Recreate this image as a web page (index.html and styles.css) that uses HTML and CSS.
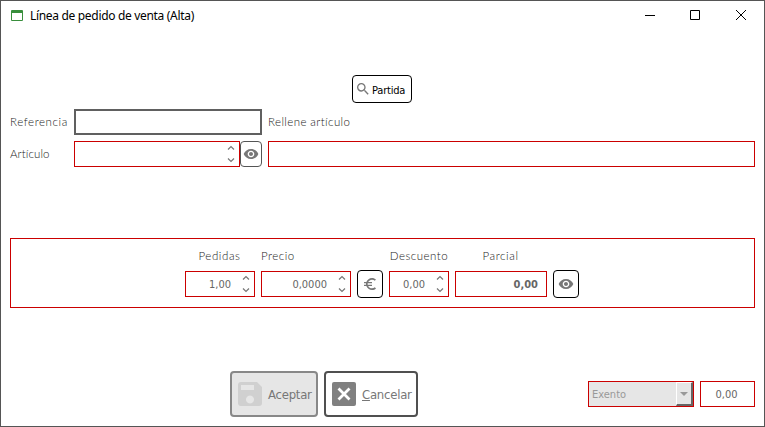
FILE: index.html
```html
<!DOCTYPE html>
<html lang="es">
<head>
<meta charset="utf-8">
<title>Línea de pedido de venta (Alta)</title>
<link rel="stylesheet" href="styles.css">
</head>
<body>
<svg class="defs" width="0" height="0">
  <symbol id="eye" viewBox="0 0 24 24"><path d="M12 4.500C7 4.500 2.730 7.610 1 12c1.730 4.390 6 7.500 11 7.500s9.270-3.110 11-7.500c-1.730-4.390-6-7.500-11-7.500zM12 17c-2.760 0-5-2.240-5-5s2.240-5 5-5 5 2.240 5 5-2.240 5-5 5zm0-8c-1.660 0-3 1.340-3 3s1.340 3 3 3 3-1.340 3-3-1.340-3-3-3z"/></symbol>
  <symbol id="spin" viewBox="0 0 8 18"><path d="M1 4.500 4 1.500 7 4.500M1 13.500 4 16.500 7 13.500" fill="none" stroke="#777" stroke-width="1.200"/></symbol>
</svg>
<div class="window">
  <header class="titlebar">
    <svg class="app-icon" width="12" height="11" viewBox="0 0 12 11"><path d="M0 1q0-1 1-1h10q1 0 1 1v9q0 1-1 1H1q-1 0-1-1zM1 3v7h10V3z" fill="#388e3c" fill-rule="evenodd"/></svg>
    <h1 class="title">Línea de pedido de venta (Alta)</h1>
    <svg class="controls" width="102" height="12" viewBox="0 0 102 12" fill="none" stroke="#000"><path d="M0 6.500h10M45.500 1.500h9v9h-9z"/><path d="M91 1l10 10M101 1 91 11"/></svg>
  </header>
  <main class="form">
    <button class="btn partida"><svg width="16" height="16" viewBox="0 0 24 24" fill="#777"><path d="M15.500 14h-.79l-.28-.27A6.470 6.470 0 0 0 16 9.500 6.500 6.500 0 1 0 9.500 16c1.610 0 3.090-.59 4.230-1.570l.27.28v.79l5 4.990L20.490 19l-4.990-5zm-6 0C7.010 14 5 11.990 5 9.500S7.010 5 9.500 5 14 7.010 14 9.500 11.990 14 9.500 14z"/></svg><span>Partida</span></button>
    <div class="row">
      <label class="label referencia">Referencia</label>
      <div class="reference-field"></div>
      <span class="label hint">Rellene artículo</span>
    </div>
    <div class="row article">
      <label class="label articulo">Artículo</label>
      <div class="lookup">
        <div class="field"><svg class="spin"><use href="#spin"/></svg></div>
        <button class="btn eye-small"><svg width="16" height="16" fill="#777"><use href="#eye"/></svg></button>
      </div>
      <div class="field wide"></div>
    </div>
    <section class="panel">
      <div class="column pedidas"><label class="label">Pedidas</label><div class="field">1,00<svg class="spin"><use href="#spin"/></svg></div></div>
      <div class="column precio"><label class="label">Precio</label><div class="field">0,0000<svg class="spin"><use href="#spin"/></svg></div></div>
      <button class="btn square"><svg width="16" height="16" viewBox="0 0 24 24" fill="#777"><path d="M15 18.500c-2.510 0-4.680-1.420-5.760-3.500H15v-2H8.580c-.05-.33-.08-.66-.08-1s.03-.67.08-1H15V9H9.240C10.320 6.920 12.500 5.500 15 5.500c1.610 0 3.090.59 4.230 1.570L21 5.300C19.410 3.870 17.300 3 15 3c-3.920 0-7.240 2.510-8.480 6H3v2h3.060c-.08.66-.08 1.340 0 2H3v2h3.520c1.240 3.490 4.560 6 8.480 6 2.310 0 4.410-.87 6-2.300l-1.780-1.770c-1.130.98-2.600 1.570-4.220 1.570z"/></svg></button>
      <div class="column descuento"><label class="label">Descuento</label><div class="field">0,00<svg class="spin"><use href="#spin"/></svg></div></div>
      <div class="column parcial"><label class="label">Parcial</label><div class="field">0,00</div></div>
      <button class="btn square"><svg width="16" height="16" fill="#777"><use href="#eye"/></svg></button>
    </section>
    <footer class="footer">
      <button class="action accept" disabled><svg width="24" height="24" viewBox="0 0 24 24"><path d="M3 0h16l5 5v16q0 3-3 3H3q-3 0-3-3V3q0-3 3-3zM3 3v5h13V3zM12 13.500a4 4 0 1 0 .01 0z" fill="#d0d0d0" fill-rule="evenodd"/></svg><span>Aceptar</span></button>
      <button class="action cancel"><svg width="24" height="24" viewBox="0 0 24 24"><rect width="24" height="24" rx="2" fill="#808080"/><path d="M6.500 6.500l11 11M17.500 6.500l-11 11" stroke="#fff" stroke-width="2.800"/></svg><span><u>C</u>ancelar</span></button>
      <div class="field tax">Exento<span class="drop"><svg width="8" height="4" viewBox="0 0 8 4"><path d="M0 0h8L4 4z" fill="#999"/></svg></span></div>
      <div class="field rate">0,00</div>
    </footer>
  </main>
</div>
</body>
</html>
```
FILE: styles.css
```css
* { box-sizing: border-box; }
body { margin: 0; background: #fff; }
.defs { display: block; }
.window {
  width: 765px; height: 427px;
  border: 1px solid #555;
  background: #fff;
  font: 12px "DejaVu Sans Condensed", "DejaVu Sans", sans-serif;
  font-stretch: condensed;
  color: #666;
}
svg { display: block; flex: none; }
button { margin: 0; padding: 0; font: inherit; color: inherit; background: #fff; }
.titlebar { height: 28px; display: flex; align-items: center; padding: 0 17px 0 10px; }
.app-icon { margin-top: 1px; }
.title { margin: 0 0 0 7px; font: 12px "Noto Sans", sans-serif; color: #000; letter-spacing: -0.320px; white-space: nowrap; }
.controls { margin-left: auto; }
.form { padding: 46px 9px 0; }
.btn { display: flex; align-items: center; justify-content: center; border: 1px solid #000; border-radius: 4px; }
.partida { width: 60px; height: 28px; margin: 0 0 6px 342px; padding-left: 2px; justify-content: flex-start; font-size: 11px; color: #000; letter-spacing: -0.200px; }
.partida span { padding: 2px 0 0 1px; }
.row { display: grid; grid-template-columns: 58px 188px 1fr; column-gap: 6px; align-items: center; height: 26px; }
.article { margin-top: 6px; }
.label { font: 300 11.500px/16px Lato, sans-serif; letter-spacing: 0.500px; color: #222; white-space: nowrap; }
.referencia { letter-spacing: 0.600px; }
.articulo { letter-spacing: 0.100px; }
.hint { letter-spacing: 0.400px; }
.reference-field { height: 26px; border: 2px solid #606060; }
.lookup { display: grid; grid-template-columns: 166px 22px; }
.field { height: 26px; border: 1px solid #cb0000; display: flex; align-items: center; justify-content: flex-end; padding-right: 4px; background: #fff; font-size: 11px; white-space: nowrap; }
.spin { width: 8px; height: 18px; margin-left: 11px; }
.eye-small { height: 26px; border-color: #555; }
.panel { height: 70px; margin-top: 71px; padding: 0 0 10px 174px; border: 1px solid #cb0000; display: flex; align-items: flex-end; gap: 6px; }
.column { display: grid; row-gap: 7px; }
.column .label { text-align: center; }
.pedidas { width: 70px; }
.pedidas .label, .parcial .label { padding-right: 1px; letter-spacing: 0.600px; }
.precio { width: 90px; }
.precio .label { text-align: left; }
.descuento { width: 60px; }
.parcial { width: 92px; }
.parcial .field { padding-right: 8px; font-weight: 700; }
.square { width: 26px; height: 28px; margin-bottom: -1px; }
.footer { margin-top: 63px; display: flex; align-items: center; }
.action { height: 46px; display: flex; align-items: center; gap: 6px; padding-left: 6px; border: 2px solid #505050; border-radius: 4px; font-size: 13px; letter-spacing: -0.250px; color: #777; white-space: nowrap; }
.accept { width: 88px; background: #e6e6e6; border-color: #888; }
.cancel { width: 94px; margin-left: 6px; }
.accept { margin-left: 220px; }
.tax { width: 106px; margin-left: 170px; padding: 0 0 0 3px; justify-content: space-between; background: #e6e6e6; color: #999; }
.drop { width: 17px; height: 24px; display: flex; align-items: center; justify-content: center; background: #e6e6e6; border: 1px solid #fff; border-right: 2px solid #666; border-bottom: 2px solid #666; }
.rate { width: 55px; margin-left: 6px; justify-content: center; padding: 0 2px 0 0; }
```
